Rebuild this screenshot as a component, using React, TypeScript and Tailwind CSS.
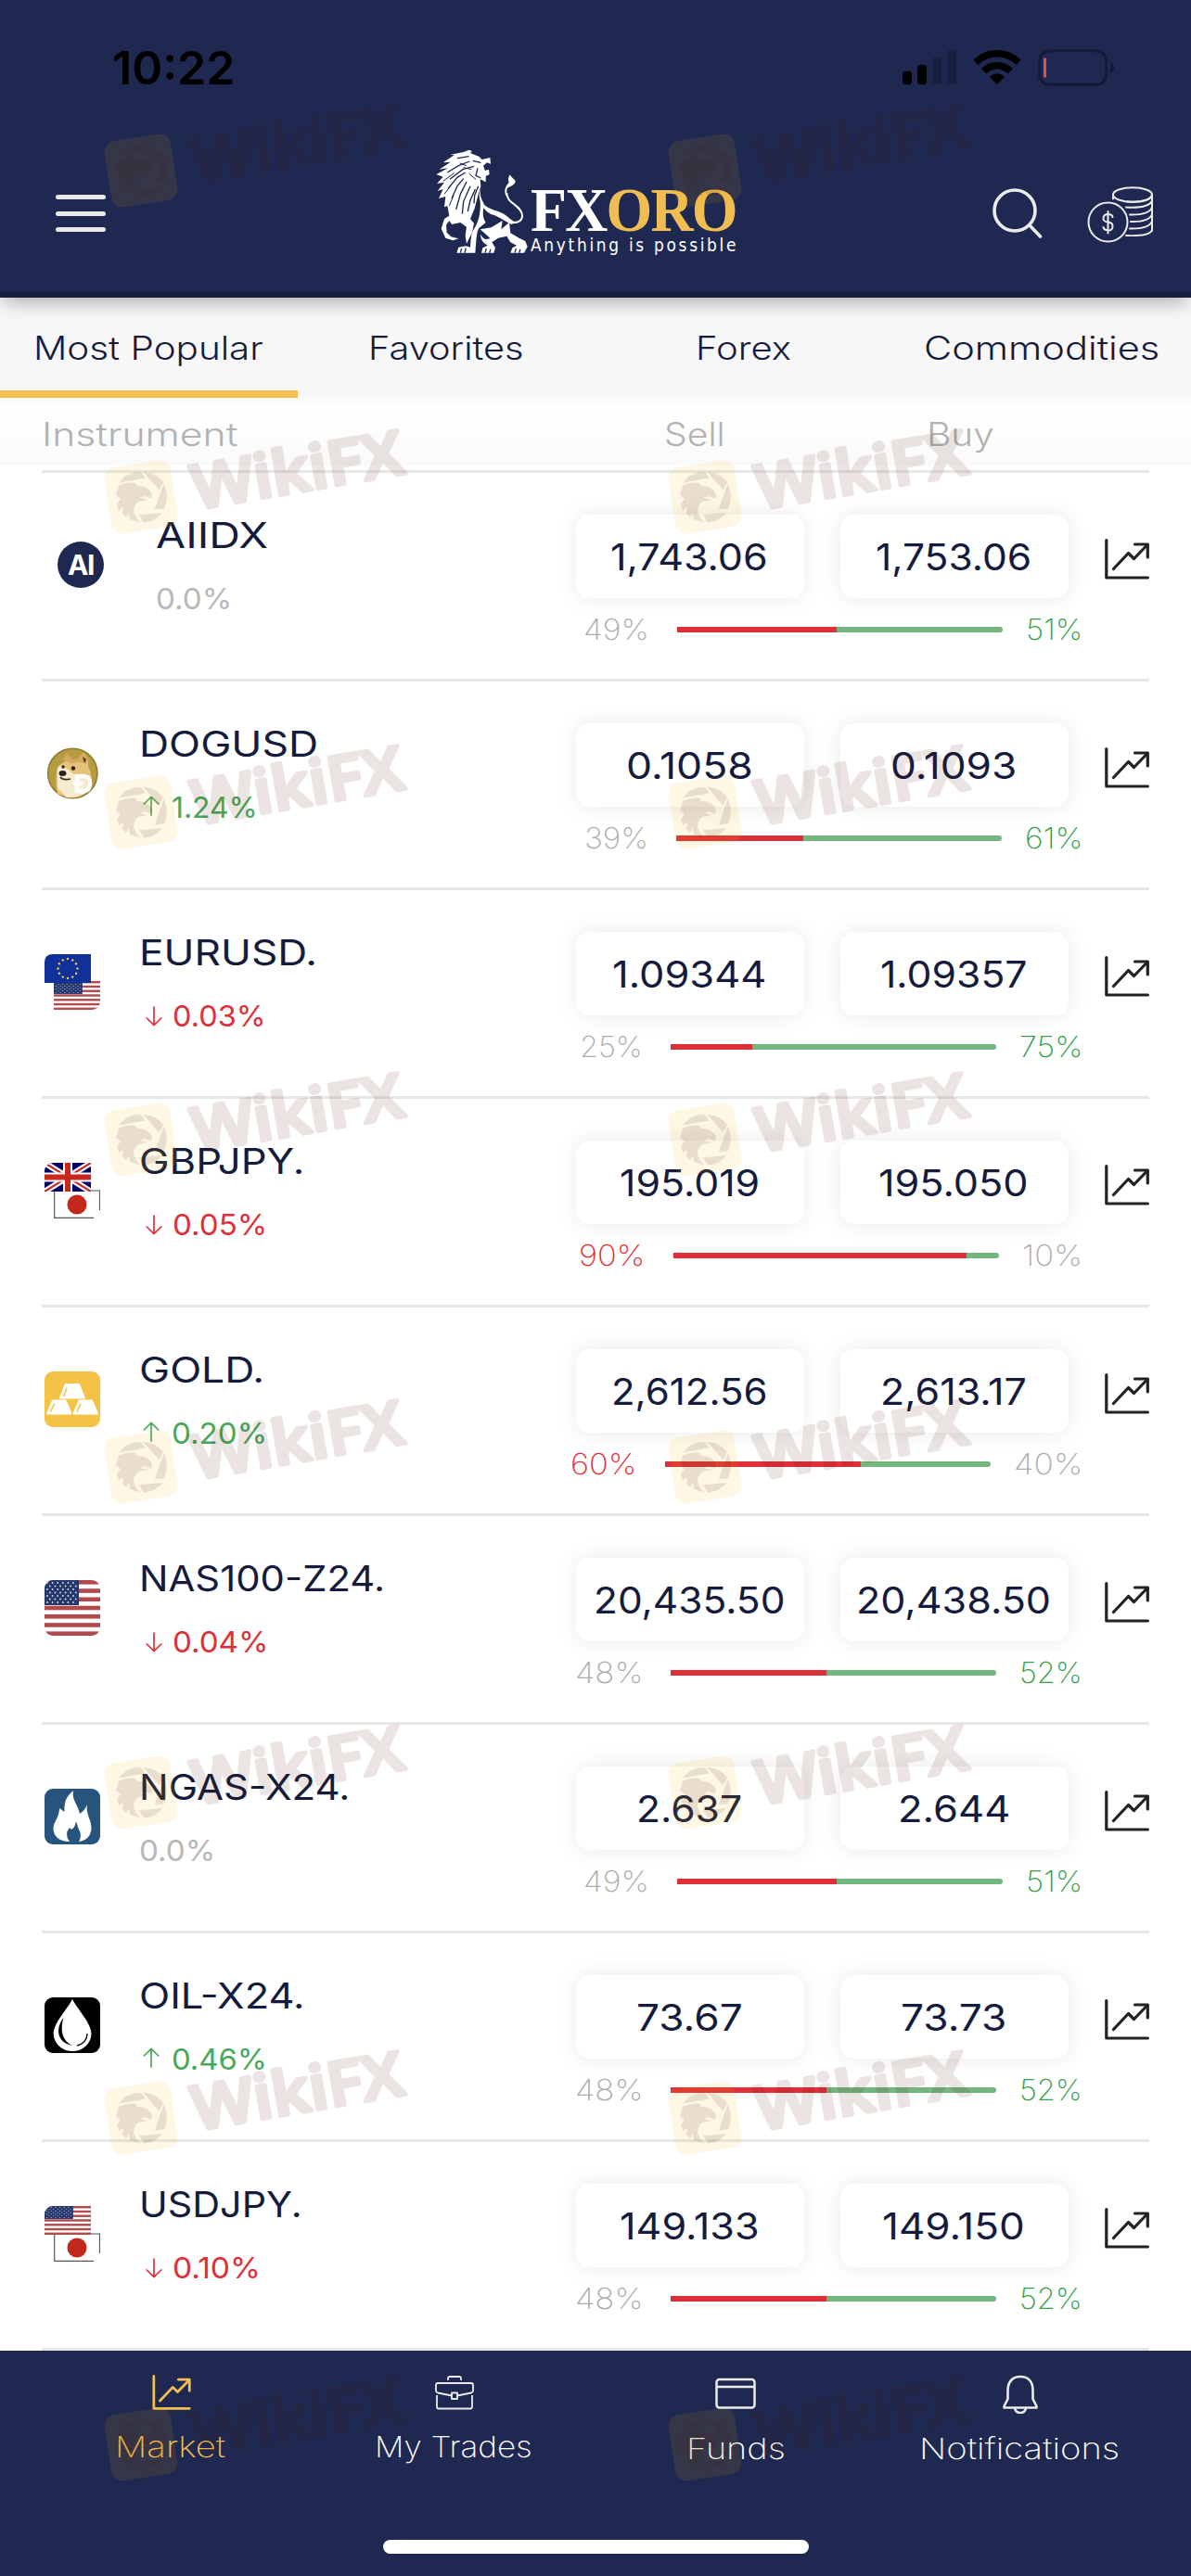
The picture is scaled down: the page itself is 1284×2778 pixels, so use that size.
import React, { useLayoutEffect, useRef, useState } from 'react';

interface FitProps {
  w: number;
  className?: string;
  children: React.ReactNode;
}

// Stretches a single line of text to a fixed width
const Fit: React.FC<FitProps> = ({ w, className = '', children }) => {
  const ref = useRef<HTMLSpanElement>(null);
  const [scale, setScale] = useState(1);
  const full = w + 4;

  useLayoutEffect(() => {
    if (ref.current && ref.current.offsetWidth > 0) {
      setScale(full / ref.current.offsetWidth);
    }
  }, [full]);

  return (
    <span className={`-mr-px -ml-[3px] block shrink-0 text-left ${className}`} style={{ width: full }}>
      <span
        ref={ref}
        className="inline-block origin-left whitespace-nowrap"
        style={{ transform: `scaleX(${scale})` }}
      >
        {children}
      </span>
    </span>
  );
};

const ChartIcon = ({ className }: { className: string }) => (
  <svg viewBox="0 0 48 44" className={className} fill="none" stroke="currentColor" strokeWidth="3.2" strokeLinecap="round" strokeLinejoin="round">
    <path d="M1.8 1.6V42H46.4" />
    <path d="M9.5 32.5L25.5 15.5L31.5 21.5L46 6.5" />
    <path d="M32.5 6H46.3V20" />
  </svg>
);

const Lion = () => (
  <svg viewBox="58 31 300 339" className="mt-4 ml-[355px] h-[113px] w-[100px] shrink-0" fill="#fff">
    <path d="M62 112L100 92L72 96L108 72L84 74L120 50L108 48L150 40L168 33L178 37L172 43L200 54L210 64L236 58L238 78L226 74L214 84L220 100L232 96L234 112L222 118L222 137L204 128L206 150L196 184L186 222L172 256L184 270L178 300L160 336L156 310L160 282L140 268L112 274L104 262L94 276L96 300L110 314L134 320L116 326L92 318L78 288L88 256L104 246L98 214L88 218L92 184L70 190L84 160L66 166L88 138L64 142L84 120Z" />
    <g fill="none" stroke="#1f2850" strokeWidth="4">
      <path d="M98 106L134 84L170 70M106 128L148 96L184 86M100 158L130 122L156 106M112 190L130 150L150 126M126 226L140 176L160 136M146 240L150 200L172 150M164 232L172 196L188 160M184 206L186 180L198 150" />
      <path d="M180 68L206 74M196 92L190 116L206 124M130 60L168 54M112 290L138 292M110 300L136 306" />
      <path d="M84 134L120 108M88 176L108 150M104 214L118 180M138 76L160 84M150 90L176 96M168 110L190 128" strokeWidth="3" />
    </g>
    <path d="M206 160C200 182 212 196 217 210C240 230 262 228 280 240C296 250 306 262 320 268L304 274C290 266 270 254 250 244C232 240 222 230 215 220C212 240 212 252 222 268L200 286C192 298 192 320 188 366H128L134 348L158 344L172 348C174 320 174 300 188 282C200 262 206 232 204 200C200 186 200 172 206 160Z" />
    <path d="M290 172C288 206 338 212 340 244C341 264 322 272 300 266" fill="none" stroke="#fff" strokeWidth="6" />
    <path d="M287 180C280 164 286 150 297 138C293 126 296 120 301 113C304 124 318 128 318 136C314 148 300 152 292 156C288 166 290 174 292 182Z" />
    <path d="M204 290L240 284L276 262L272 290L298 268L302 302L330 318L350 328L357 346L346 366H302L308 350L322 342L302 332L290 312L262 318L242 332L253 350L248 366H208L212 350L228 342C212 334 204 320 206 306C212 322 224 326 236 318Z" />
    <path d="M140 366L144 352M154 366L158 350M220 366L224 352M234 366L238 354M316 366L320 352M330 366L334 354" stroke="#1f2850" strokeWidth="4" />
  </svg>
);

const UsFlag = ({ className }: { className: string }) => (
  <svg viewBox="0 0 60 60" preserveAspectRatio="none" className={className}>
    <rect width="60" height="60" fill="#fff" />
    {[0, 1, 2, 3, 4, 5, 6].map((i) => (
      <rect key={i} y={i * 9.23} width="60" height="4.62" fill="#b24a4c" />
    ))}
    <rect width="37" height="27" fill="#26376b" />
    {[0, 1, 2, 3, 4, 5, 6].map((r) =>
      [0, 1, 2, 3, 4, 5].map((c) => (
        <circle key={`${r}-${c}`} cx={3 + c * 5.6 + (r % 2) * 2.8} cy={3 + r * 3.5} r="0.9" fill="#dfe3ee" />
      ))
    )}
  </svg>
);

const JpFlag = () => (
  <svg viewBox="0 0 50 31" className="h-[31px] w-[50px]">
    <path d="M0 0H50V22Q50 30 42 31H0Z" fill="#fff" />
    <path d="M49.5 22V1H40M0.7 2V30.3H43" fill="none" stroke="#555" strokeWidth="1.2" />
    <circle cx="25" cy="16" r="10.5" fill="#c3281c" />
  </svg>
);

const EuFlag = () => (
  <svg viewBox="0 0 50 31" className="h-[31px] w-[50px]">
    <path d="M9 0H50V31H0V9Q0 0 9 0Z" fill="#12309a" />
    {Array.from({ length: 12 }, (_, i) => (
      <circle
        key={i}
        cx={25 + 10.5 * Math.cos((i * Math.PI) / 6)}
        cy={15.5 + 10.5 * Math.sin((i * Math.PI) / 6)}
        r="1.2"
        fill="#e8d040"
      />
    ))}
  </svg>
);

const UkFlag = () => (
  <svg viewBox="0 0 50 31" className="h-[31px] w-[50px] rounded-tl-[9px]">
    <rect width="50" height="31" fill="#010066" />
    <path d="M0 0L50 31M50 0L0 31" stroke="#fff" strokeWidth="6.5" />
    <path d="M0 0L50 31M50 0L0 31" stroke="#c8281e" strokeWidth="2.2" />
    <path d="M25 0V31M0 15.5H50" stroke="#fff" strokeWidth="10" />
    <path d="M25 0V31M0 15.5H50" stroke="#c8281e" strokeWidth="6" />
  </svg>
);

const Pair = ({ top, bottom }: { top: React.ReactNode; bottom: React.ReactNode }) => (
  <div className="relative flex h-[60px] w-[60px] flex-col">
    <div className="relative z-10 h-[31px] w-[50px]">{top}</div>
    <div className="-mt-[2px] ml-[10px] h-[31px] w-[50px]">{bottom}</div>
  </div>
);

const icons: Record<string, React.ReactNode> = {
  ai: (
    <div className="mt-[5px] mr-[14px] ml-[14px] flex h-[50px] w-[50px] items-center justify-center rounded-full bg-[#1f2850] text-[30px] font-bold tracking-tighter text-white">
      AI
    </div>
  ),
  doge: (
    <svg viewBox="0 0 60 60" className="h-[60px] w-[60px]">
      <circle cx="30.3" cy="30" r="26.7" fill="#b59c40" stroke="#8f7a2c" strokeWidth="1.5" />
      <path d="M14 52Q10 34 15 22Q24 14 36 15L42 7Q48 13 47 22Q54 36 48 49Q38 58 24 56Z" fill="#e6c27c" />
      <path d="M14 34Q12 22 18 22L26 26Q32 34 44 32L48 48Q38 57 24 56L14 46Z" fill="#f5ebcf" />
      <path d="M20 15L24 8L30 15L36 14L42 7Q47 12 46 20L38 18L28 19Z" fill="#d7a960" />
      <path d="M41 12L45 15L43 19Z" fill="#4b3020" />
      <circle cx="31" cy="24.5" r="2.2" fill="#2d2118" />
      <circle cx="20" cy="23" r="1.7" fill="#2d2118" />
      <ellipse cx="19.5" cy="30" rx="4" ry="3" fill="#29231f" />
      <path d="M17 34Q20 38 28 36" fill="none" stroke="#3b2c20" strokeWidth="1.8" />
      <path d="M35 33H42Q49 33 49 41Q49 49 42 49H35ZM31 41H41" fill="none" stroke="#fff" strokeWidth="4.5" />
    </svg>
  ),
  eurusd: <Pair top={<EuFlag />} bottom={<UsFlag className="h-[31px] w-[50px] rounded-br-[9px]" />} />,
  gbpjpy: <Pair top={<UkFlag />} bottom={<JpFlag />} />,
  usdjpy: <Pair top={<UsFlag className="h-[31px] w-[50px] rounded-tl-[9px]" />} bottom={<JpFlag />} />,
  us: <UsFlag className="h-[60px] w-[60px] rounded-[9px]" />,
  gold: (
    <svg viewBox="0 0 60 60" className="h-[60px] w-[60px]">
      <rect width="60" height="60" rx="9" fill="#f4c244" />
      <g fill="#fff" stroke="#fff" strokeWidth="2" strokeLinejoin="round">
        <path d="M22.500 14H37L43 28.500H17Z" />
        <path d="M9 31.500H22.500L28.500 45.500H3Z" />
        <path d="M37.500 31.500H51L57 45.500H31.500Z" />
      </g>
      <path d="M24 18L20.500 27M10.500 35L6.500 43.500M39 35L35 43.500" stroke="#f4c244" strokeWidth="1.6" />
    </svg>
  ),
  gas: (
    <svg viewBox="0 0 60 60" className="h-[60px] w-[60px]">
      <rect width="60" height="60" rx="9" fill="#26547c" />
      <path d="M31 2C29 12 36 17 38 27Q43 24 46 17C44 27 51 34 50.500 43C50 51 45 56 37 57Q41 50 37 44L34 35Q33 42 29 44L27 42Q21 49 27 57C16 57 9 51 9.500 42C10 35 16 31 16 21L21.500 25C21 13 24 8 31 2Z" fill="#fff" />
    </svg>
  ),
  oil: (
    <svg viewBox="0 0 60 60" className="h-[60px] w-[60px]">
      <rect width="60" height="60" rx="9" fill="#000" />
      <path d="M30 2C35 12 50.500 28 50.500 39A20.300 19 0 0 1 9.700 39C9.700 28 25 12 30 2Z" fill="#fff" />
      <path d="M20.500 22C11 34 14 49 30 52C18 46 17 34 20.500 22Z" fill="#000" />
      <path d="M46 39Q46 49 35 52" fill="none" stroke="#000" strokeWidth="1.3" />
    </svg>
  ),
};

interface Instrument {
  icon: string;
  name: string;
  nameW: number;
  change: string;
  changeW: number;
  dir: 'up' | 'down' | 'flat';
  sell: string;
  sellW: number;
  buy: string;
  buyW: number;
  sellPct: number;
  sellPctW: number;
  buyPctW: number;
}

const instruments: Instrument[] = [
  { icon: 'ai', name: 'AIIDX', nameW: 117, change: '0.0%', changeW: 78, dir: 'flat', sell: '1,743.06', sellW: 166, buy: '1,753.06', buyW: 164, sellPct: 49, sellPctW: 67, buyPctW: 57 },
  { icon: 'doge', name: 'DOGUSD', nameW: 189, change: '1.24%', changeW: 89, dir: 'up', sell: '0.1058', sellW: 133, buy: '0.1093', buyW: 132, sellPct: 39, sellPctW: 65, buyPctW: 58 },
  { icon: 'eurusd', name: 'EURUSD.', nameW: 188, change: '0.03%', changeW: 97, dir: 'down', sell: '1.09344', sellW: 162, buy: '1.09357', buyW: 154, sellPct: 25, sellPctW: 64, buyPctW: 64 },
  { icon: 'gbpjpy', name: 'GBPJPY.', nameW: 174, change: '0.05%', changeW: 98, dir: 'down', sell: '195.019', sellW: 147, buy: '195.050', buyW: 158, sellPct: 90, sellPctW: 68, buyPctW: 61 },
  { icon: 'gold', name: 'GOLD.', nameW: 131, change: '0.20%', changeW: 99, dir: 'up', sell: '2,612.56', sellW: 164, buy: '2,613.17', buyW: 154, sellPct: 60, sellPctW: 68, buyPctW: 70 },
  { icon: 'us', name: 'NAS100-Z24.', nameW: 261, change: '0.04%', changeW: 100, dir: 'down', sell: '20,435.50', sellW: 202, buy: '20,438.50', buyW: 206, sellPct: 48, sellPctW: 69, buyPctW: 64 },
  { icon: 'gas', name: 'NGAS-X24.', nameW: 223, change: '0.0%', changeW: 78, dir: 'flat', sell: '2.637', sellW: 110, buy: '2.644', buyW: 117, sellPct: 49, sellPctW: 67, buyPctW: 57 },
  { icon: 'oil', name: 'OIL-X24.', nameW: 174, change: '0.46%', changeW: 99, dir: 'up', sell: '73.67', sellW: 111, buy: '73.73', buyW: 110, sellPct: 48, sellPctW: 69, buyPctW: 64 },
  { icon: 'usdjpy', name: 'USDJPY.', nameW: 172, change: '0.10%', changeW: 91, dir: 'down', sell: '149.133', sellW: 147, buy: '149.150', buyW: 150, sellPct: 48, sellPctW: 69, buyPctW: 64 },
];

const changeColors = {
  up: 'text-[#48a857]',
  down: 'text-[#df2f38]',
  flat: 'text-[#b8b8b8]',
};

const PriceBox = ({ value, w }: { value: string; w: number }) => (
  <div className="flex h-[90px] w-[246px] items-center justify-center rounded-[15px] bg-white pt-[2px] text-[40px] font-normal text-[#151b3d] shadow-[0_0_24px_rgba(0,0,0,0.09)]">
    <Fit w={w}>{value}</Fit>
  </div>
);

const InstrumentRow = ({ item }: { item: Instrument }) => {
  const buyPct = 100 - item.sellPct;
  return (
    <div className="mx-[45px] flex h-[225px] border-t-[3px] border-[#e7e7e7]">
      <div className="flex w-[576px] pl-[3px]">
        <div className="mt-[69px]">{icons[item.icon]}</div>
        <div className="ml-[45px] pt-[47px]">
          <div className="text-[38.5px] leading-[40px] text-[#151b3d]">
            <Fit w={item.nameW}>{item.name}</Fit>
          </div>
          <div className={`mt-8 flex text-[31.5px] leading-[33px] ${changeColors[item.dir]}`}>
            {item.dir !== 'flat' && (
              <svg
                viewBox="0 0 18 22"
                className={item.dir === 'up' ? 'mt-[4px] mr-[16px] ml-[1px] h-[22px] w-[18px]' : 'mt-[6px] mr-[14px] ml-[4px] h-[22px] w-[18px] rotate-180'}
                fill="none"
                stroke="currentColor"
                strokeWidth="1.7"
                strokeLinecap="round"
              >
                <path d="M9 21V1.500M1.200 9L9 1.500L16.800 9" />
              </svg>
            )}
            <Fit w={item.changeW}>{item.change}</Fit>
          </div>
        </div>
      </div>
      <div className="w-[545px] pt-[45px]">
        <div className="flex gap-[39px]">
          <PriceBox value={item.sell} w={item.sellW} />
          <PriceBox value={item.buy} w={item.buyW} />
        </div>
        <div className="mt-[17px] flex items-center justify-end text-[31.5px] leading-[33px] font-extralight">
          <Fit w={item.sellPctW} className={item.sellPct > 50 ? 'text-[#df2f38]' : 'text-[#adadad]'}>
            {item.sellPct}%
          </Fit>
          <div className="mr-7 ml-[31px] flex h-[6px] w-[351px] shrink-0 overflow-hidden rounded-r-full bg-[#74b67f]">
            <div className="h-full bg-[#df2f38]" style={{ width: `${item.sellPct}%` }} />
          </div>
          <Fit w={item.buyPctW} className={buyPct > 50 ? 'text-[#35a047]' : 'text-[#adadad]'}>
            {buyPct}%
          </Fit>
        </div>
      </div>
      <ChartIcon className="mt-[71px] ml-[25px] h-[44px] w-[48px] shrink-0 text-[#222]" />
    </div>
  );
};

const Watermark = () => (
  <svg viewBox="0 -40 360 200" className="h-[200px] w-[360px]">
    <g opacity="0.1">
      <rect x="4" y="48" width="72" height="72" rx="12" fill="#f0b400" transform="rotate(-9 40 84)" />
    </g>
    <g opacity="0.108" fill="#4f190f">
      <path d="M16.300 68.500Q24 57 39.700 57L44.700 63.500Z" />
      <path d="M42.500 57Q56 57.500 64 67.700L59.700 76.500Z" />
      <path d="M64.700 69.600Q71 83 64.700 96.400L54.700 97.200Z" />
      <path d="M38 103.300L63 101Q55 111 43 111.400Z" />
      <path d="M13 82L16.300 71.600Q26 67.500 34.700 69L36 72L43 72.700Q51 76 52 82L50.700 85.700L44.700 83L38 85L48 87L38 88.800Q33 91 32 98Q33 106 39.700 111.800L28 108L27 101L24 106L20 102L21 95L16.300 98L14 92L18 86Z" />
      <g transform="translate(99 97.500) rotate(-9.800)">
        <text
          textLength="230"
          lengthAdjust="spacingAndGlyphs"
          fontFamily="'Open Sans', sans-serif"
          fontWeight="600"
          fontSize="66"
          stroke="#4f190f"
          strokeWidth="4.500"
          strokeLinejoin="round"
        >
          WikiFX
        </text>
      </g>
    </g>
  </svg>
);

const watermarkTops = [60, 412, 752, 1105, 1458, 1809, 2160, 2512];

const tabs = [
  { label: 'Most Popular', w: 244 },
  { label: 'Favorites', w: 164 },
  { label: 'Forex', w: 99 },
  { label: 'Commodities', w: 250 },
];

const App: React.FC = () => {
  const [activeTab, setActiveTab] = useState('Most Popular');

  return (
    <div className="relative flex h-[2778px] w-[1284px] flex-col overflow-hidden bg-white font-[Inter,sans-serif]">
      <header className="relative z-10 h-[321px] shrink-0 border-b-[6px] border-[#18203f] bg-[#1f2850] shadow-[0_8px_20px_-4px_rgba(0,0,0,0.33)]">
        <div className="flex h-[145px] items-center pl-[124px] text-black">
          <div className="w-[849px] text-[50px] leading-none font-semibold">
            <Fit w={128}>10:22</Fit>
          </div>
          <svg viewBox="0 0 58 37" className="h-[37px] w-[58px]">
            <rect y="23" width="10" height="14" rx="3" />
            <rect x="16" y="16" width="10" height="21" rx="3" />
            <rect x="32" y="8" width="10" height="29" rx="3" fill="#18203f" />
            <rect x="48" width="10" height="37" rx="3" fill="#18203f" />
          </svg>
          <svg viewBox="0 0 52 37" className="ml-[18px] h-[37px] w-[52px]">
            <path d="M26 0C36 0 45 4 51.500 10.500L46.500 16C41 10.500 34 7.500 26 7.500S11 10.500 5.500 16L0.500 10.500C7 4 16 0 26 0Z" />
            <path d="M26 13C32.500 13 38.500 15.500 43 20L37.500 25.500C34.500 22.500 30.500 20.500 26 20.500S17.500 22.500 14.500 25.500L9 20C13.500 15.500 19.500 13 26 13Z" />
            <path d="M26 25.500C29 25.500 32 27 34 29L26 37L18 29C20 27 23 25.500 26 25.500Z" />
          </svg>
          <svg viewBox="0 0 84 40" className="ml-[18px] h-[40px] w-[84px]">
            <rect x="1.700" y="1.700" width="72" height="36.600" rx="11" fill="none" stroke="#131a38" strokeWidth="3" />
            <path d="M78 14Q82 16 82 20T78 26Z" fill="#131a38" />
            <rect x="6" y="9.500" width="3" height="21" fill="#ef4a42" />
          </svg>
        </div>
        <div className="flex h-[170px]">
          <button className="mt-[65px] ml-[60px] flex h-[40px] w-[54px] shrink-0 flex-col justify-between">
            <span className="h-[5px] w-full rounded-full bg-[#e9e9e9]" />
            <span className="h-[5px] w-full rounded-full bg-[#e9e9e9]" />
            <span className="h-[5px] w-full rounded-full bg-[#e9e9e9]" />
          </button>
          <Lion />
          <div className="mt-[56px] ml-[6px] w-[218px] shrink-0">
            <div className="flex h-[51px] font-['Liberation_Serif',serif] text-[68px] leading-[50px] font-bold tracking-[-2px]">
              <Fit w={218}>
                <span className="text-white">FX</span>
                <span className="text-[#f0bd52]">ORO</span>
              </Fit>
            </div>
            <div className="font-['DejaVu_Sans',sans-serif] text-[19px] leading-6 tracking-[3px] text-white">
              <Fit w={220}>Anything is possible</Fit>
            </div>
          </div>
          <svg viewBox="0 0 54 56" className="mt-[58px] ml-[277px] h-[56px] w-[54px] shrink-0" fill="none" stroke="#ebebeb" strokeWidth="3.600" strokeLinecap="round">
            <circle cx="24" cy="24" r="22" />
            <path d="M40 40L51.500 52" />
          </svg>
          <svg viewBox="0 0 72 62" className="mt-[56px] ml-[48px] h-[62px] w-[72px] shrink-0" fill="none" stroke="#ebebeb" strokeWidth="2" strokeLinecap="round">
            <circle cx="22.500" cy="38.500" r="21" />
            <ellipse cx="49" cy="9" rx="21" ry="7.700" />
            <path d="M28 9V13.500M70 9V48M43 16.500Q68 18 70 9M42 22.500Q66 24 70 15.500M46 30.500Q67 31 70 22.500M47 38Q67 38.500 70 30M46 45.500Q67 46 70 37.500M42 53Q68 54 70 47" />
            <path d="M27.500 33Q27 30 22.500 30T17.500 34T22.500 38.500T27.500 43.500T22.500 47.500T17.500 44M22.500 27V50.500" />
          </svg>
        </div>
      </header>

      <nav className="flex h-[108px] shrink-0 bg-[#f7f7f7] text-[35px] font-light text-[#151b3d]">
        {tabs.map((tab) => (
          <button
            key={tab.label}
            onClick={() => setActiveTab(tab.label)}
            className={`flex h-full w-[321px] items-center justify-center border-b-8 pt-[8px] ${
              activeTab === tab.label ? 'border-[#f3bf53]' : 'border-transparent'
            }`}
          >
            <Fit w={tab.w}>{tab.label}</Fit>
          </button>
        ))}
      </nav>

      <div className="mb-[5px] flex h-[73px] shrink-0 items-center border-t-[6px] border-[#fafafa] bg-gradient-to-b from-white to-[#fafafa] pl-[48px] text-[35px] font-light text-[#b2b2b2]">
        <div className="w-[671px]">
          <Fit w={207}>Instrument</Fit>
        </div>
        <div className="w-[283px]">
          <Fit w={62}>Sell</Fit>
        </div>
        <Fit w={69}>Buy</Fit>
      </div>

      <main className="h-[2028px] shrink-0 overflow-hidden">
        {instruments.map((item) => (
          <InstrumentRow key={item.name} item={item} />
        ))}
        <div className="mx-[45px] h-[3px] bg-[#e7e7e7]" />
      </main>

      <footer className="flex h-[243px] shrink-0 flex-col items-center bg-[#1f2850] text-[31.5px] leading-[34px] font-extralight text-white">
        <div className="flex h-[204px] w-[1220px] pt-[26px]">
          <div className="flex w-[305px] flex-col items-center text-[#f3bf53]">
            <ChartIcon className="h-[38px] w-[42px]" />
            <Fit w={115} className="mt-[23px]">Market</Fit>
          </div>
          <div className="flex w-[305px] flex-col items-center">
            <svg viewBox="0 0 42 38" className="h-[38px] w-[42px]" fill="none" stroke="#ebebeb" strokeWidth="1.800" strokeLinejoin="round">
              <path d="M14 6V4Q14 2 16 2H26Q28 2 28 4V6M3 9H39Q41 9 41 11V17Q41 19 39 19.500L24 22.500M18 22.500L3 19.500Q1 19 1 17V11Q1 9 3 9M2 22V34.500Q2 36.500 4 36.500H38Q40 36.500 40 34.500V22" />
              <rect x="18" y="19.500" width="6" height="6.500" />
            </svg>
            <Fit w={166} className="mt-[23px]">My Trades</Fit>
          </div>
          <div className="flex w-[305px] flex-col items-center">
            <svg viewBox="0 0 44 38" className="mr-[3px] h-[38px] w-[44px]" fill="none" stroke="#ebebeb" strokeWidth="2.500">
              <rect x="1.500" y="5" width="41" height="30.500" rx="3" />
              <path d="M1.500 13H42.500" />
            </svg>
            <Fit w={103} className="mt-[25px]">Funds</Fit>
          </div>
          <div className="flex w-[305px] flex-col items-center">
            <svg viewBox="0 0 38 42" className="h-[42px] w-[38px]" fill="none" stroke="#ebebeb" strokeWidth="2.600" strokeLinejoin="round">
              <path d="M5.500 17C5.500 7 11 2 19 2S32.500 7 32.500 17V26L36.500 34V35.500H1.500V34L5.500 26Z" />
              <path d="M13 36Q14 41 19 41T25 36" />
            </svg>
            <Fit w={212} className="mt-[21px]">Notifications</Fit>
          </div>
        </div>
        <div className="h-[15px] w-[459px] rounded-full bg-white" />
      </footer>

      <div className="pointer-events-none absolute inset-0 z-20">
        {watermarkTops.map((top) => (
          <div key={top} className="absolute left-[112px] flex gap-[248px]" style={{ top }}>
            <Watermark />
            <Watermark />
          </div>
        ))}
      </div>
    </div>
  );
};

export default App;
